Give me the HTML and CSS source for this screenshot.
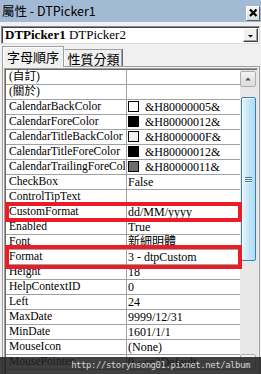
FILE: index.html
```html
<!DOCTYPE html>
<html>
<head>
<meta charset="utf-8">
<title>屬性 - DTPicker1</title>
<link rel="stylesheet" href="styles.css">
</head>
<body>
<div class="window">
  <div class="titlebar">
    <span class="title">屬性 - DTPicker1</span>
    <span class="close"><svg width="12" height="13" viewBox="0 0 12 13"><path d="M3 2.5 L9.5 9 M9.5 2.5 L3 9" stroke="#000" stroke-width="2.3" fill="none"/></svg></span>
  </div>
  <div class="combo">
    <div class="combo-inner">
      <span class="combo-text"><b>DTPicker1</b> DTPicker2</span>
      <span class="combo-btn"><svg width="13" height="12" viewBox="0 0 13 12"><path d="M4 6 L9 6 L6.5 8.5 Z" fill="#000"/></svg></span>
    </div>
  </div>
  <div class="tabs">
    <div class="tab active">字母順序</div>
    <div class="tab">性質分類</div>
  </div>
  <div class="panel">
    <div class="grid-box">
      <div class="grid-inner">
        <div class="rows">
          <div class="cell name">(自訂)</div><div class="cell val"></div>
          <div class="cell name">(關於)</div><div class="cell val"></div>
          <div class="cell name">CalendarBackColor</div><div class="cell val"><span class="sw sw-white"></span>&amp;H80000005&amp;</div>
          <div class="cell name">CalendarForeColor</div><div class="cell val"><span class="sw sw-black"></span>&amp;H80000012&amp;</div>
          <div class="cell name">CalendarTitleBackColor</div><div class="cell val"><span class="sw sw-face"></span>&amp;H8000000F&amp;</div>
          <div class="cell name">CalendarTitleForeColor</div><div class="cell val"><span class="sw sw-black"></span>&amp;H80000012&amp;</div>
          <div class="cell name">CalendarTrailingForeColor</div><div class="cell val"><span class="sw sw-gray"></span>&amp;H80000011&amp;</div>
          <div class="cell name">CheckBox</div><div class="cell val">False</div>
          <div class="cell name">ControlTipText</div><div class="cell val"></div>
          <div class="cell name">CustomFormat</div><div class="cell val">dd/MM/yyyy</div>
          <div class="cell name">Enabled</div><div class="cell val">True</div>
          <div class="cell name">Font</div><div class="cell val">新細明體</div>
          <div class="cell name">Format</div><div class="cell val">3 - dtpCustom</div>
          <div class="cell name">Height</div><div class="cell val">18</div>
          <div class="cell name">HelpContextID</div><div class="cell val">0</div>
          <div class="cell name">Left</div><div class="cell val">24</div>
          <div class="cell name">MaxDate</div><div class="cell val">9999/12/31</div>
          <div class="cell name">MinDate</div><div class="cell val">1601/1/1</div>
          <div class="cell name">MouseIcon</div><div class="cell val">(None)</div>
          <div class="cell name">MousePointer</div><div class="cell val">0 - cc2Default</div>
        </div>
        <div class="scrollbar">
          <div class="sb-btn sb-up"><svg width="15" height="14" viewBox="0 0 15 14"><path d="M4.5 8.5 L10.5 8.5 L7.5 5.5 Z" fill="#4d4d4d"/></svg></div>
          <div class="sb-gap"></div>
          <div class="sb-thumb"><span class="grip"></span><span class="grip"></span><span class="grip"></span></div>
          <div class="sb-track"></div>
          <div class="sb-btn sb-down"></div>
        </div>
      </div>
    </div>
  </div>
  <div class="hl hl-custom"></div>
  <div class="hl hl-format"></div>
  <div class="watermark">http://storynsong01.pixnet.net/album</div>
</div>
</body>
</html>
```
FILE: styles.css
```css
* { box-sizing: border-box; }
html, body { margin: 0; padding: 0; }
body {
  width: 261px;
  height: 374px;
  overflow: hidden;
  background: #f0f0f0;
  font-family: "Liberation Serif", "Noto Sans CJK TC", serif;
}
.window {
  position: relative;
  width: 261px;
  height: 374px;
  display: flex;
  flex-direction: column;
  overflow: hidden;
  background: #f0f0f0;
}
.titlebar {
  height: 22px;
  flex: none;
  background: #a3bad4;
  display: flex;
  justify-content: space-between;
  padding-left: 2px;
  padding-right: 1px;
}
.title {
  font-family: "Noto Sans CJK TC", "Noto Sans", sans-serif;
  font-size: 12.5px;
  line-height: 22px;
  color: #000;
}
.close {
  margin-top: 6px;
  width: 14px;
  height: 15px;
  background: linear-gradient(#f4f4f4, #dcdcdc);
  border: 1px solid;
  border-color: #ffffff #5a5a5a #5a5a5a #ffffff;
  display: flex;
}
.combo {
  flex: none;
  margin-top: 4px;
  margin-left: 1px;
  width: 259px;
  height: 18px;
  border: 1px solid #8a8a8a;
  border-right-color: #dcdcdc;
  border-bottom-color: #dcdcdc;
  background: #fff;
}
.combo-inner {
  height: 100%;
  border-top: 1px solid #404040;
  border-left: 1px solid #404040;
  display: flex;
  justify-content: space-between;
  padding-left: 2px;
}
.combo-text {
  font-size: 13px;
  line-height: 13px;
  white-space: nowrap;
}
.combo-btn {
  width: 15px;
  height: 14px;
  margin-right: 1px;
  background: #f0f0f0;
  border: 1px solid;
  border-color: #ffffff #404040 #404040 #ffffff;
  box-shadow: inset -1px -1px 0 #a0a0a0;
  display: flex;
}
.tabs {
  flex: none;
  margin-top: 2px;
  height: 20px;
  display: flex;
  align-items: flex-end;
  padding-left: 2px;
  position: relative;
  z-index: 2;
}
.tab {
  font-family: "Noto Sans CJK TC", "Noto Sans", sans-serif;
  font-size: 13px;
  color: #000;
  text-align: center;
  background: #f0f0f0;
  border: 1px solid;
  border-bottom: none;
  border-color: #a0a0a0 #696969 transparent #ffffff;
  box-shadow: inset 1px 1px 0 #e3e3e3;
  white-space: nowrap;
}
.tab.active {
  width: 62px;
  height: 21px;
  margin-bottom: -1px;
  line-height: 19px;
  border-color: #a0a0a0 #a0a0a0 transparent #a0a0a0;
  box-shadow: inset 1px 1px 0 #ffffff;
}
.tab:not(.active) {
  width: 59px;
  height: 17px;
  line-height: 17px;
  border-left-color: #ffffff;
  box-shadow: inset -1px 0 0 #a0a0a0;
}
.panel {
  flex: 1;
  margin-left: 2px;
  width: 258px;
  border: 1px solid #a0a0a0;
  border-bottom: none;
  padding: 1px 1px 0 1px;
  background: #f0f0f0;
}
.grid-box {
  height: 100%;
  border: 1px solid #a0a0a0;
  border-right-color: #e3e3e3;
  border-bottom: none;
}
.grid-inner {
  height: 100%;
  border-top: 1px solid #696969;
  border-left: 1px solid #696969;
  display: flex;
  background: #fff;
}
.rows {
  width: 234px;
  flex: none;
  display: grid;
  grid-template-columns: 121px 113px;
  grid-auto-rows: 15px;
  align-content: start;
  background: #fff;
}
.cell {
  height: 15px;
  border-bottom: 1px solid #a0a0a0;
  font-size: 11.6px;
  line-height: 14px;
  color: #000;
  white-space: nowrap;
  overflow: hidden;
}
.name {
  border-right: 1px solid #a0a0a0;
  padding-left: 3px;
}
.val {
  padding-left: 1px;
  display: flex;
  align-items: flex-start;
  font-size: 12px;
}
.sw {
  flex: none;
  width: 11px;
  height: 11px;
  margin-top: 1px;
  margin-right: 6px;
  border: 1px solid #000;
}
.sw-white { background: #fff; }
.sw-black { background: #000; }
.sw-face { background: #f0f0f0; }
.sw-gray { background: #6d6d6d; }
.scrollbar {
  width: 17px;
  flex: none;
  display: flex;
  flex-direction: column;
  background: #e8e8e8;
  padding: 1px 1px 0 0;
}
.sb-btn {
  width: 16px;
  height: 16px;
  flex: none;
  border: 1px solid #adadad;
  border-radius: 2px;
  background: linear-gradient(#f2f2f2, #dcdcdc);
  display: flex;
}
.sb-gap { height: 10px; flex: none; }
.sb-thumb {
  height: 164px;
  flex: none;
  margin-left: 1px;
  width: 15px;
  border: 1px solid #3c7fb1;
  border-radius: 2px;
  background: linear-gradient(to right, #e6f5fd, #c9e8f8 45%, #addcf4);
  box-shadow: inset 1px 1px 0 rgba(255,255,255,0.8);
  display: flex;
  flex-direction: column;
  justify-content: center;
  align-items: center;
  gap: 1px;
}
.grip {
  width: 7px;
  height: 1px;
  background: #45769a;
  box-shadow: 0 1px 0 #e8f6fd;
}
.sb-track { flex: 1; }
.sb-down { margin-bottom: 4px; }
.hl {
  position: absolute;
  left: 5px;
  width: 237px;
  border: 4px solid #ea1c26;
  z-index: 5;
}
.hl-custom { top: 202px; height: 20px; }
.hl-format { top: 245px; height: 24px; }
.watermark {
  position: absolute;
  left: 0;
  right: 0;
  bottom: 0;
  height: 17px;
  background: rgba(32, 32, 32, 0.86);
  color: #d4d4d4;
  font-family: "DejaVu Sans Mono", "Liberation Mono", monospace;
  font-size: 9px;
  letter-spacing: -0.45px;
  line-height: 17px;
  text-align: right;
  padding-right: 11px;
  z-index: 6;
}
```
